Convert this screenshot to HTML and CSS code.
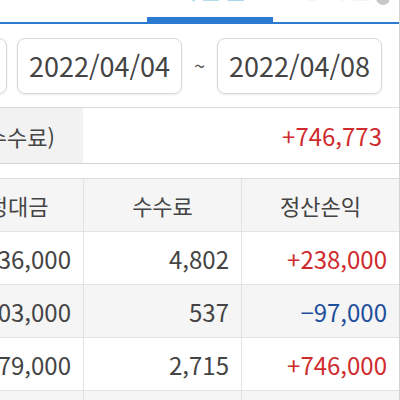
FILE: index.html
```html
<!DOCTYPE html>
<html lang="ko">
<head>
<meta charset="utf-8">
<link rel="stylesheet" href="styles.css">
</head>
<body>
<div class="page">
  <div class="tabs">
    <div class="tab">일별</div>
    <div class="tab active">기간별</div>
    <div class="tab dim">종목별</div>
    <div class="icon"></div>
  </div>
  <div class="dates">
    <div class="date stub"></div>
    <div class="date">2022/04/04</div>
    <div class="tilde">~</div>
    <div class="date">2022/04/08</div>
  </div>
  <div class="summary">
    <div class="label">실현손익(수수료)</div>
    <div class="value up">+746,773</div>
  </div>
  <div class="table">
    <div class="row head">
      <div class="cell c1">약정대금</div>
      <div class="cell c2">수수료</div>
      <div class="cell c3">정산손익</div>
    </div>
    <div class="row">
      <div class="cell c1 num">1,236,000</div>
      <div class="cell c2 num">4,802</div>
      <div class="cell c3 num up">+238,000</div>
    </div>
    <div class="row alt">
      <div class="cell c1 num">1,003,000</div>
      <div class="cell c2 num">537</div>
      <div class="cell c3 num down">−97,000</div>
    </div>
    <div class="row">
      <div class="cell c1 num">2,279,000</div>
      <div class="cell c2 num">2,715</div>
      <div class="cell c3 num up">+746,000</div>
    </div>
    <div class="row alt">
      <div class="cell c1 num">&nbsp;</div>
      <div class="cell c2 num">&nbsp;</div>
      <div class="cell c3 num">&nbsp;</div>
    </div>
  </div>
</div>
</body>
</html>
```

FILE: styles.css
```css
html, body {
  margin: 0;
  padding: 0;
  background: #fff;
}
body {
  width: 400px;
  height: 400px;
  overflow: hidden;
  font-family: "Noto Sans CJK KR", "Noto Sans", sans-serif;
  color: #444;
}
.page {
  width: 399px;
  height: 400px;
  border-right: 1px solid #d4d4d4;
  overflow: hidden;
}
.tabs {
  position: relative;
  display: flex;
  height: 22px;
  border-bottom: 2px solid #2a7bd0;
}
.tab {
  width: 126px;
  display: flex;
  justify-content: center;
  align-items: flex-end;
  font-size: 26px;
  line-height: 1;
  color: #a6d6e8;
  height: 22px;
  box-sizing: border-box;
  padding-bottom: 21px;
  overflow: hidden;
}
.tab:first-child {
  width: 147px;
  color: transparent;
}
.tab.active {
  border-bottom: 5px solid #2a7bd0;
  padding-bottom: 16px;
}
.tab.dim {
  color: #f4f4f4;
}
.icon {
  position: absolute;
  right: 9px;
  top: -9px;
  width: 14px;
  height: 14px;
  border-radius: 50%;
  background: #c8c8c8;
}
.dates {
  display: flex;
  align-items: center;
  height: 83px;
  border-bottom: 1px solid #dcdcdc;
}
.date {
  flex: none;
  box-sizing: border-box;
  width: 165px;
  height: 56px;
  border: 1px solid #d8d8d8;
  border-radius: 8px;
  box-shadow: 0 1px 2px rgba(0,0,0,0.08);
  display: flex;
  align-items: center;
  justify-content: center;
  font-size: 27px;
  color: #444;
  margin-left: 10px;
}
.date.stub {
  width: 40px;
  margin-left: -33px;
}
.tilde {
  width: 35px;
  margin-left: 0;
  margin-right: -10px;
  text-align: center;
  font-size: 20px;
  color: #555;
}
.summary {
  display: flex;
  height: 55px;
  border-bottom: 1px solid #d4d4d4;
}
.summary .label {
  width: 150px;
  margin-left: -67px;
  background: #f2f2f2;
  display: flex;
  align-items: center;
  justify-content: flex-end;
  padding-right: 28px;
  box-sizing: border-box;
  font-size: 22px;
  white-space: nowrap;
  overflow: hidden;
}
.summary .value {
  flex: 1;
  display: flex;
  align-items: center;
  justify-content: flex-end;
  padding-right: 17px;
  font-size: 24px;
}
.up { color: #cf2b2e; }
.down { color: #1f4f9c; }
.table {
  margin-top: 14px;
  margin-left: -67px;
  border-top: 1px solid #dcdcdc;
}
.row {
  display: flex;
  height: 52px;
  border-bottom: 1px solid #e2e2e2;
}
.row.head, .row.alt {
  background: #f5f5f5;
}
.cell {
  box-sizing: border-box;
  display: flex;
  align-items: center;
  white-space: nowrap;
}
.c1 { width: 150px; }
.c2 { width: 158px; border-left: 1px solid #e2e2e2; }
.c3 { width: 158px; border-left: 1px solid #e2e2e2; }
.head .cell {
  justify-content: center;
  font-size: 22px;
  color: #444;
}
.num {
  justify-content: flex-end;
  padding-right: 12px;
  font-size: 24px;
}
```
